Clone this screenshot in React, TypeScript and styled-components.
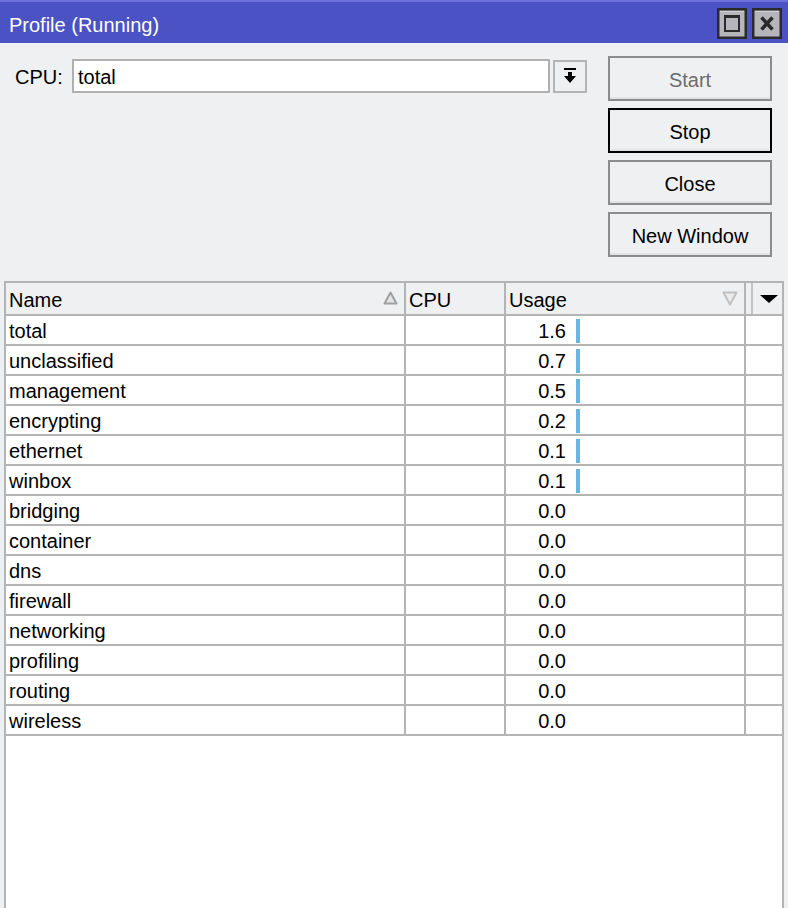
import React from "react";
import styled, { createGlobalStyle } from "styled-components";

const Global = createGlobalStyle`
  html, body { margin: 0; padding: 0; background: #eff0f2; }
  body { font-family: "Liberation Sans", Arial, sans-serif; font-size: 20px; color: #000; }
  * { box-sizing: border-box; }
`;

const Window = styled.div`
  width: 788px;
  height: 908px;
  display: flex;
  flex-direction: column;
  background: #eff0f2;
  overflow: hidden;
`;

const TitleBar = styled.div`
  height: 43px;
  flex: none;
  background: #4a52c4;
  border-top: 2px solid #6a70d6;
  display: flex;
  align-items: center;
  justify-content: space-between;
  padding: 0 6px 0 9px;
  color: #fff;
  font-size: 20px;
`;

const TitleText = styled.div`
  margin-top: 5px;
`;

const TitleButtons = styled.div`
  display: flex;
  gap: 5px;
  margin-top: 1px;
`;

const TitleBtn = styled.div`
  width: 30px;
  height: 31px;
  display: flex;
`;

const TopPanel = styled.div`
  flex: none;
  display: flex;
  justify-content: space-between;
  padding: 13px 16px 24px 15px;
`;

const FormRow = styled.div`
  display: flex;
  align-items: center;
  height: 34px;
  margin-top: 3px;
`;

const Label = styled.div`
  width: 57px;
  padding-top: 2px;
`;

const Input = styled.div`
  width: 478px;
  height: 34px;
  background: #fff;
  border: 2px solid #b0b0b0;
  display: flex;
  align-items: center;
  padding: 2px 0 0 4px;
`;

const DropBtn = styled.div`
  width: 34px;
  height: 33px;
  margin-left: 3px;
  border: 2px solid #b4b4b4;
  background: #eff0f2;
  display: flex;
  align-items: center;
  justify-content: center;
`;

const ButtonColumn = styled.div`
  display: flex;
  flex-direction: column;
  gap: 7px;
  width: 164px;
`;

const Button = styled.div<{ $disabled?: boolean; $focused?: boolean }>`
  height: 45px;
  padding-top: 3px;
  border: 2px solid ${(p) => (p.$focused ? "#000" : "#8c8c8c")};
  box-shadow: inset 0 -2px 0 #e2e3e6;
  background: #eff0f2;
  color: ${(p) => (p.$disabled ? "#6c6c6c" : "#000")};
  display: flex;
  align-items: center;
  justify-content: center;
`;

const Table = styled.div`
  flex: 1;
  margin: 0 4px;
  background: #fff;
  border: 2px solid #b4b4b4;
  border-bottom: none;
  display: flex;
  flex-direction: column;
`;

const HeaderRow = styled.div`
  display: grid;
  grid-template-columns: 400px 100px 240px 7px 1fr;
  height: 33px;
  background: #eff0f2;
  border-bottom: 2px solid #b4b4b4;
`;

const HeaderCell = styled.div<{ $last?: boolean }>`
  display: flex;
  align-items: center;
  justify-content: space-between;
  padding: 3px 6px 0 3px;
  border-right: ${(p) => (p.$last ? "none" : "2px solid #b4b4b4")};
`;

const SortIcon = styled.svg`
  margin-top: -4px;
`;

const Spacer = styled.div`
  border-right: 2px solid #c4c4c4;
`;

const ArrowCell = styled.div`
  display: flex;
  align-items: center;
  justify-content: center;
  padding-left: 2px;
`;

const Row = styled.div`
  display: grid;
  grid-template-columns: 400px 100px 240px 1fr;
  height: 30px;
  border-bottom: 2px solid #b4b4b4;
`;

const Cell = styled.div`
  display: flex;
  align-items: center;
  padding: 2px 0 0 3px;
  border-right: 2px solid #b4b4b4;
  &:last-child { border-right: none; }
`;

const UsageCell = styled(Cell)`
  padding-left: 0;
`;

const Num = styled.div`
  width: 60px;
  text-align: right;
`;

const Bar = styled.div`
  height: 24px;
  margin-left: 10px;
  background: #68b6e6;
`;

const rows: [string, number][] = [
  ["total", 1.6],
  ["unclassified", 0.7],
  ["management", 0.5],
  ["encrypting", 0.2],
  ["ethernet", 0.1],
  ["winbox", 0.1],
  ["bridging", 0],
  ["container", 0],
  ["dns", 0],
  ["firewall", 0],
  ["networking", 0],
  ["profiling", 0],
  ["routing", 0],
  ["wireless", 0],
];

export default function App() {
  return (
    <>
      <Global />
      <Window>
        <TitleBar>
          <TitleText>Profile (Running)</TitleText>
          <TitleButtons>
            <TitleBtn>
              <svg width="30" height="31" viewBox="0 0 30 31">
                <rect x="1.25" y="1.25" width="27.5" height="28.5" fill="#b6b6ba" stroke="#2a2a2a" strokeWidth="2.5" />
                <line x1="3" y1="3.5" x2="27" y2="3.5" stroke="#d0d0d4" strokeWidth="1" />
                <rect x="8" y="8" width="14" height="15" fill="none" stroke="#2a2a2a" strokeWidth="2" />
                <line x1="8" y1="8.5" x2="22" y2="8.5" stroke="#2a2a2a" strokeWidth="3" />
              </svg>
            </TitleBtn>
            <TitleBtn>
              <svg width="30" height="31" viewBox="0 0 30 31">
                <rect x="1.25" y="1.25" width="27.5" height="28.5" fill="#b6b6ba" stroke="#2a2a2a" strokeWidth="2.5" />
                <line x1="3" y1="3.5" x2="27" y2="3.5" stroke="#d0d0d4" strokeWidth="1" />
                <path d="M9.5 9.5 L20.5 21.5 M20.5 9.5 L9.5 21.5" stroke="#2a2a2a" strokeWidth="3.5" />
              </svg>
            </TitleBtn>
          </TitleButtons>
        </TitleBar>
        <TopPanel>
          <FormRow>
            <Label>CPU:</Label>
            <Input>total</Input>
            <DropBtn>
              <svg width="14" height="16" viewBox="0 0 14 16">
                <rect x="1" y="0" width="12" height="2" fill="#000" />
                <rect x="5" y="4" width="4" height="5" fill="#000" />
                <path d="M1 8 H13 L7 15 Z" fill="#000" />
              </svg>
            </DropBtn>
          </FormRow>
          <ButtonColumn>
            <Button $disabled>Start</Button>
            <Button $focused>Stop</Button>
            <Button>Close</Button>
            <Button>New Window</Button>
          </ButtonColumn>
        </TopPanel>
        <Table>
          <HeaderRow>
            <HeaderCell>
              <span>Name</span>
              <SortIcon width="15" height="14" viewBox="0 0 15 14">
                <path d="M7.5 1.5 L13.5 12.5 H1.5 Z" fill="#e4e4e4" stroke="#a0a0a0" strokeWidth="2" strokeLinejoin="round" />
              </SortIcon>
            </HeaderCell>
            <HeaderCell>
              <span>CPU</span>
            </HeaderCell>
            <HeaderCell>
              <span>Usage</span>
              <SortIcon width="16" height="15" viewBox="0 0 16 15">
                <path d="M1.5 1.5 H14.5 L8 13.5 Z" fill="#ececec" stroke="#c0c0c0" strokeWidth="2" strokeLinejoin="round" />
              </SortIcon>
            </HeaderCell>
            <Spacer />
            <ArrowCell>
              <svg width="18" height="8" viewBox="0 0 18 8">
                <path d="M0 0 H18 L9 8 Z" fill="#000" />
              </svg>
            </ArrowCell>
          </HeaderRow>
          {rows.map(([name, v]) => (
            <Row key={name}>
              <Cell>{name}</Cell>
              <Cell />
              <UsageCell>
                <Num>{v.toFixed(1)}</Num>
                {v > 0 && <Bar style={{ width: `${Math.max(4, Math.round(v * 2.5))}px` }} />}
              </UsageCell>
              <Cell />
            </Row>
          ))}
        </Table>
      </Window>
    </>
  );
}
